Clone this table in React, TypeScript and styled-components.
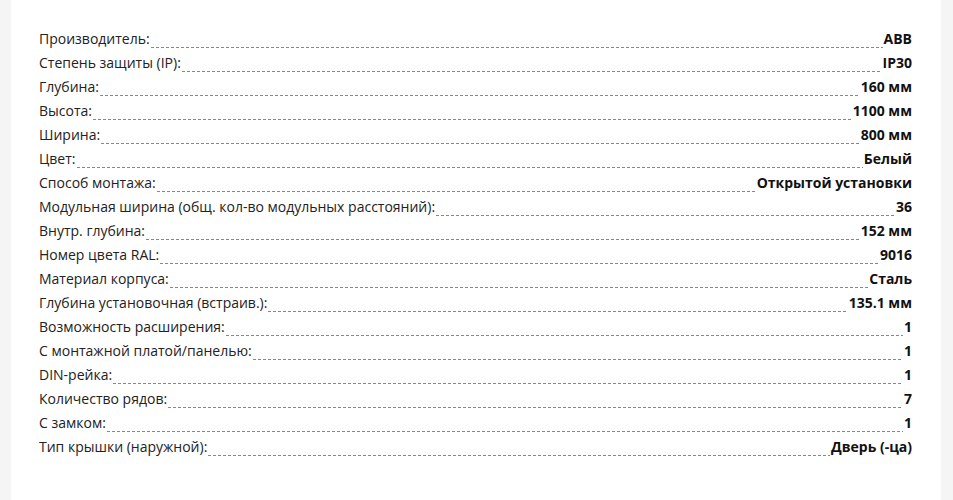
import React from "react";
import styled, { createGlobalStyle } from "styled-components";

const Global = createGlobalStyle`
  html, body { margin: 0; padding: 0; background: #f5f5f5; }
  body { font-family: "Open Sans", "Noto Sans", sans-serif; }
`;

const Page = styled.div`
  display: flex;
  padding-left: 11px;
  padding-right: 12px;
`;

const Panel = styled.div`
  flex: 1;
  background: #fff;
  min-height: 500px;
  box-sizing: border-box;
  padding: 27px 29px 0 28px;
`;

const Row = styled.div`
  display: flex;
  align-items: baseline;
  height: 24px;
  line-height: 24px;
  font-size: 14px;
`;

const Label = styled.span`
  color: #222;
  white-space: nowrap;
`;

const Leader = styled.span`
  flex: 1;
  height: 1px;
  margin: 0 1px;
  background-image: repeating-linear-gradient(to right, #888 0 3px, transparent 3px 5px);
  align-self: baseline;
  position: relative;
  top: 4px;
`;

const Value = styled.span`
  color: #111;
  font-weight: 700;
  white-space: nowrap;
`;

const specs: [string, string][] = [
  ["Производитель:", "ABB"],
  ["Степень защиты (IP):", "IP30"],
  ["Глубина:", "160 мм"],
  ["Высота:", "1100 мм"],
  ["Ширина:", "800 мм"],
  ["Цвет:", "Белый"],
  ["Способ монтажа:", "Открытой установки"],
  ["Модульная ширина (общ. кол-во модульных расстояний):", "36"],
  ["Внутр. глубина:", "152 мм"],
  ["Номер цвета RAL:", "9016"],
  ["Материал корпуса:", "Сталь"],
  ["Глубина установочная (встраив.):", "135.1 мм"],
  ["Возможность расширения:", "1"],
  ["С монтажной платой/панелью:", "1"],
  ["DIN-рейка:", "1"],
  ["Количество рядов:", "7"],
  ["С замком:", "1"],
  ["Тип крышки (наружной):", "Дверь (-ца)"],
];

export default function App() {
  return (
    <>
      <Global />
      <Page>
        <Panel>
          {specs.map(([k, v]) => (
            <Row key={k}>
              <Label>{k}</Label>
              <Leader />
              <Value>{v}</Value>
            </Row>
          ))}
        </Panel>
      </Page>
    </>
  );
}
